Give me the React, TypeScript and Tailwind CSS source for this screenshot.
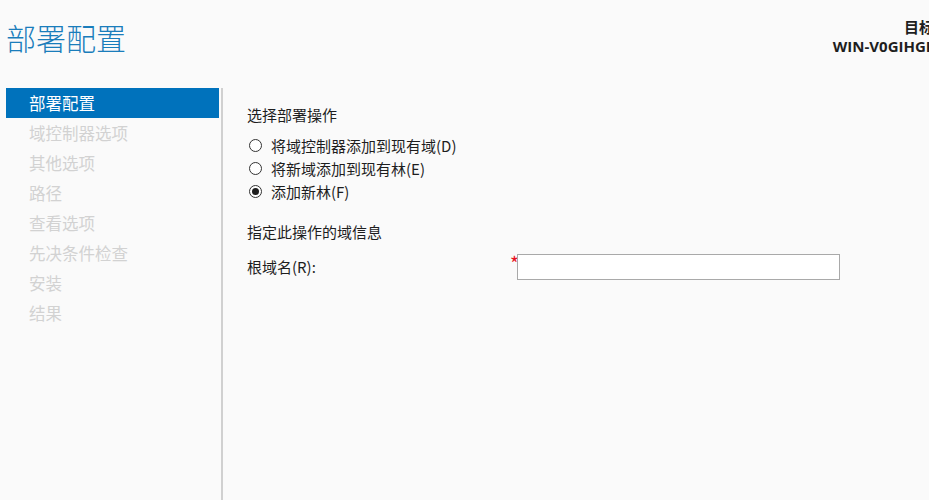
import React, { useState } from 'react';

const steps = ['部署配置', '域控制器选项', '其他选项', '路径', '查看选项', '先决条件检查', '安装', '结果'];

const options = [
    { id: 'add-dc', label: '将域控制器添加到现有域(D)' },
    { id: 'add-domain', label: '将新域添加到现有林(E)' },
    { id: 'add-forest', label: '添加新林(F)' },
];

const font = { fontFamily: '"Noto Sans CJK SC", "Noto Sans", sans-serif' };

const App: React.FC = () => {
    const [selected, setSelected] = useState('add-forest');
    const [rootDomain, setRootDomain] = useState('');

    return (
        <div className="relative w-[929px] h-[500px] overflow-hidden bg-[#fafafa] text-[#1e1e1e]" style={font}>
            <div className="flex items-start justify-between h-[88px]">
                <h1 className="ml-[6px] mt-[16px] text-[30px] font-light leading-[42px] text-[#1a7dbb]">部署配置</h1>
                <div
                    className="mt-[18px] -mr-[50px] whitespace-nowrap text-right text-[15px] font-bold leading-[19px] text-[#1e1e1e]"
                    style={{ fontFamily: '"Open Sans", "Noto Sans CJK SC", sans-serif' }}
                >
                    <div>目标服务器</div>
                    <div>WIN-V0GIHGK7Q2M</div>
                </div>
            </div>

            <div className="flex h-[412px]">
                <nav className="ml-[6px] w-[213px] shrink-0">
                    {steps.map((s, i) => (
                        <div
                            key={s}
                            className={
                                i === 0
                                    ? 'h-[30px] pl-[23px] text-[16.5px] leading-[30px] bg-[#0072bc] text-white'
                                    : 'h-[30px] pl-[23px] text-[16.5px] leading-[30px] text-[#d2d2d2]'
                            }
                        >
                            {s}
                        </div>
                    ))}
                </nav>
                <div className="ml-[2px] w-[2px] bg-[#d0d0d0]" />

                <main className="pl-[24px] pt-[17px] text-[15px]">
                    <div className="leading-[20px]">选择部署操作</div>
                    <div className="mt-[9px] flex flex-col">
                        {options.map((o) => (
                            <label key={o.id} className="flex h-[23px] items-center cursor-default">
                                <span className="ml-[2px] flex h-[13px] w-[13px] items-center justify-center rounded-full border border-[#333] bg-white">
                                    {selected === o.id && <span className="h-[7px] w-[7px] rounded-full bg-[#1e1e1e]" />}
                                </span>
                                <input
                                    type="radio"
                                    name="op"
                                    className="hidden"
                                    checked={selected === o.id}
                                    onChange={() => setSelected(o.id)}
                                />
                                <span className="ml-[9px] leading-[20px]">{o.label}</span>
                            </label>
                        ))}
                    </div>
                    <div className="mt-[19px] leading-[20px]">指定此操作的域信息</div>
                    <div className="mt-[12px] flex items-start">
                        <div className="w-[263px] pt-[3px] leading-[20px]">根域名(R):</div>
                        <span className="mt-[1px] w-[7px] text-[19px] leading-[16px] text-[#e81123]">*</span>
                        <input
                            type="text"
                            value={rootDomain}
                            onChange={(e) => setRootDomain(e.target.value)}
                            className="h-[26px] w-[323px] border border-[#a9a9a9] bg-white px-1 text-[14px] outline-none"
                        />
                    </div>
                </main>
            </div>
        </div>
    );
};

export default App;
